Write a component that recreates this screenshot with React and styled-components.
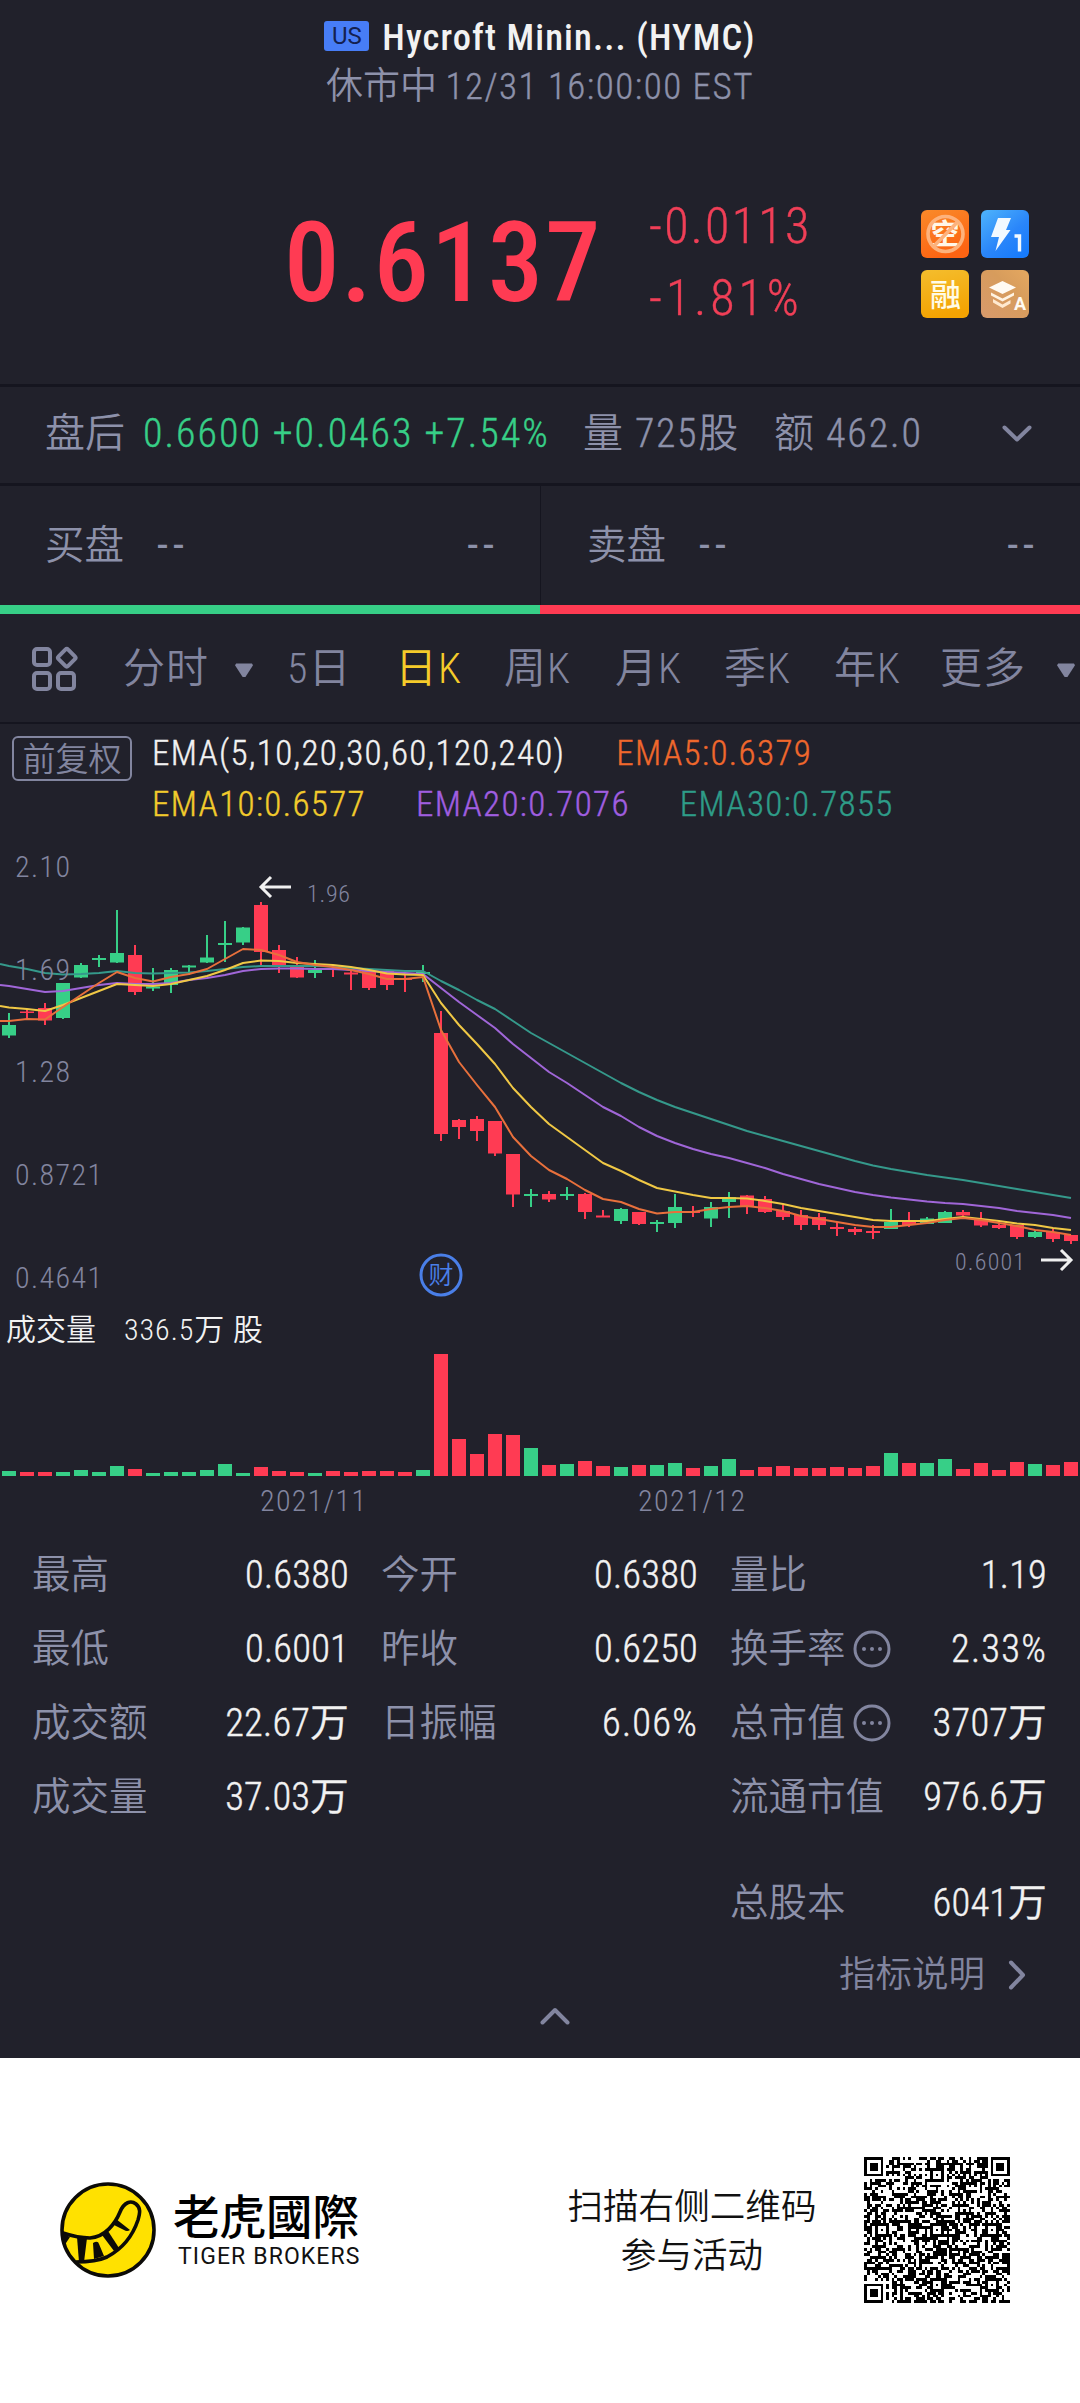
import React from 'react';
import styled, {createGlobalStyle} from 'styled-components';

const GlobalStyle = createGlobalStyle`
*{
    box-sizing:border-box;
    margin:0;
    padding:0;
}
body{
    background:#fff;
    font-family:"Roboto Condensed","Noto Sans CJK SC",sans-serif;
    font-weight:350;
    line-height:1.2;
    color:#f2f2f2;
}
svg{
    display:block;
}
`;

//Colours
const green = '#37cf87';
const red = '#ff3b53';
const grey = '#8d91aa';
const dim = '#82859f';
const line = '#15151f';

//Chart data, one entry per day: colour, body top, body bottom, wick top, wick bottom
const candles = [
    ['g',1025,1035.5,1013,1038],['r',1011.5,1013,1010,1020],['r',1008,1020.5,1003,1025],['g',983,1018,983,1019],
    ['g',965,977.5,963,978],['g',958,960,955,967],['g',953,962.5,910,963],['r',955,992,945,995],
    ['g',986.5,988.5,968,991],['g',970,985,968,993],['g',965.5,967.5,965,975],['g',957.5,962.5,935,963],
    ['g',943,945,921,962],['g',927.5,942.5,927,945],['r',905,952,902,967],['r',950,966,945,973],
    ['r',966,977.5,957,978],['g',970,973,960,978],['r',968,970,965,977],['r',972.5,974.5,970,990],
    ['r',971,988,971,990],['r',971,985,971,990],['r',978,980,971,992],['g',972,974,965,982],
    ['r',1033,1134,1011,1141],['r',1120,1127,1119,1139],['r',1119,1131,1116,1141],['r',1121,1153.5,1121,1156],
    ['r',1154,1194.5,1154,1207],['g',1194,1196,1189,1207],['r',1194,1199.5,1191,1202],['g',1194,1196,1187,1200],
    ['r',1194,1212,1193,1219],['r',1215.5,1217.5,1210,1217],['g',1209,1221,1208,1224],['r',1212,1224,1212,1225],
    ['g',1222,1224,1220,1232],['g',1207,1223,1194,1228],['r',1211,1213,1206,1217],['g',1207,1218.5,1202,1227],
    ['g',1197,1202,1192,1218],['r',1195.5,1206,1195,1214],['r',1199,1212,1196,1213],['r',1211,1217,1205,1220],
    ['r',1215,1225,1210,1230],['r',1217,1225,1213,1230],['r',1227,1229,1222,1236],['r',1229,1232,1227,1235],
    ['r',1231,1233,1225,1239],['g',1222,1229,1209,1229],['r',1222,1225,1212,1227],['g',1218.5,1224,1217,1224],
    ['g',1212,1223,1211,1223],['r',1212,1215.5,1210,1216],['r',1219,1225.5,1212,1227],['r',1225,1228,1224,1229],
    ['r',1225,1237,1225,1239],['g',1232,1237,1230,1238],['r',1232,1239,1229,1242],['r',1235,1241,1235,1244],
];
const volumes = [
    5,4,4,4,6,4,10,7,3,4,4,6,12,3,9,5,4,3,5,4,5,5,4,6,122,37,22,42,41,28,
    11,12,15,10,9,11,11,13,8,10,17,6,9,10,8,8,9,8,10,23,13,13,17,7,13,6,14,12,11,14,
];
const emaLines = [
    {color:'#35998b', start:964, values:[
        966,969,973,974.5,974,973,971,973,973.5,973,972.5,971,969,967,966,966,966,966,966.5,968,
        969,970,971,971,981,990,1000,1009,1021,1033,1043,1053,1063,1073,1083,1092,1100,1107,1113,1119,
        1125,1131,1136,1141,1146,1151,1156,1161,1165.5,1169,1172,1175,1177.5,1180,1183,1186,1189,1192,1195,1198]},
    {color:'#a066d8', start:985, values:[
        986,989,992,991,988,985,983,984,984,983,980,978,975,971,969,968.5,968.5,969,969,970,
        971,972,973,974,988,1002,1015,1028,1044,1058,1072,1083,1095,1107,1116,1127,1136,1143,1149,1154,
        1158,1163,1168,1174,1179,1184,1188,1192,1195,1197.5,1199.5,1201.5,1203,1204,1206,1208,1211,1213,1215,1218]},
    {color:'#f0c845', start:1006, values:[
        1007.5,1009,1011,1005,998,991,984,985,986,984,980,976,970,963,960.5,961,963,964,965,967,
        970,973.5,974.5,975,1003,1025,1044,1064,1088,1107,1124,1137,1150,1163,1171,1180,1188,1191.5,1195,1198,
        1198,1198.5,1201,1204,1208,1211,1214,1217,1220,1221,1221,1221,1219,1217,1219,1221,1223.5,1225,1228,1230]},
    {color:'#e8703c', start:1021, values:[
        1021,1019,1019.5,1007,995,983,972,978,981.5,977,974,969,959,949,950,955,962,965,967,970,
        974,979,979,977,1030,1062,1085,1107,1137,1156,1170,1179,1190,1199,1202,1209,1213.5,1212,1212,1209,
        1207,1206,1208,1211,1216,1219,1222,1225,1227,1227,1225,1223,1220,1218,1220,1223,1226,1230,1232,1235]},
];
const axis = [['2.10',866,55],['1.69',969,55],['1.28',1071,55],['0.8721',1174,87],['0.4641',1277,87]];
const pitch = 18;
const centre = i => 9 + i * pitch;
const paint = c => (c === 'g' ? green : red);

const stats = [
    [['最高','0.6380'],['今开','0.6380'],['量比','1.19']],
    [['最低','0.6001'],['昨收','0.6250'],['换手率','2.33%',true]],
    [['成交额','22.67万'],['日振幅','6.06%'],['总市值','3707万',true]],
    [['成交量','37.03万'],null,['流通市值','976.6万']],
];

//QR code: three finders, the alignment marks and seeded noise for the payload
const QR_SIZE = 53;
const ring = (x, y, cx, cy, r) => {
    const d = Math.max(Math.abs(x - cx), Math.abs(y - cy));
    return d > r ? null : r === 4 ? d !== 4 && d !== 2 : d !== 1;
};
const buildQr = () => {
    const marks = [[26,6],[46,26],[26,26],[6,26],[26,46],[46,46]];
    const finders = [[3,3],[49,3],[3,49]];
    let seed = 20211;
    let d = '';
    for(let y = 0; y < QR_SIZE; y++){
        for(let x = 0; x < QR_SIZE; x++){
            seed = (seed * 1103515 + 12345) % 2147483648;
            let on = (seed >> 12) % 100 < 52;
            if(x === 6 || y === 6) on = (x + y) % 2 === 0;
            marks.forEach(([cx,cy]) => {
                const hit = ring(x, y, cx, cy, 2);
                if(hit !== null) on = hit;
            });
            finders.forEach(([cx,cy]) => {
                const hit = ring(x, y, cx, cy, 4);
                if(hit !== null) on = hit;
            });
            if(on) d += `M${x} ${y}h1v1h-1z`;
        }
    }
    return d;
};
const qrPath = buildQr();

const Chevron = ({w, h, d}) => (
    <svg width={w} height={h} viewBox={`0 0 ${w} ${h}`} fill="none" stroke={dim} strokeWidth="4" strokeLinecap="round" strokeLinejoin="round">
        <path d={d} />
    </svg>
);

const Badges = () => (
    <BadgeGrid>
        <svg width="48" height="48" viewBox="0 0 48 48">
            <defs>
                <linearGradient id="short" x1="0" y1="0" x2="0.4" y2="1">
                    <stop offset="0" stopColor="#f98a2a" /><stop offset="1" stopColor="#fd6412" />
                </linearGradient>
            </defs>
            <rect width="48" height="48" rx="6" fill="url(#short)" />
            <text x="24" y="35" fontSize="29" fontWeight="700" textAnchor="middle" fill="#fff6e8">空</text>
            <circle cx="24.5" cy="24" r="17.5" fill="none" stroke="#fdb27c" strokeWidth="3.6" />
            <path d="M12.5 36.5L37 11.5" stroke="#fdb27c" strokeWidth="3.6" />
        </svg>
        <svg width="48" height="48" viewBox="0 0 48 48">
            <defs>
                <linearGradient id="flash" x1="0" y1="0" x2="0.8" y2="1">
                    <stop offset="0" stopColor="#4fb4fb" /><stop offset="0.6" stopColor="#2a86fa" /><stop offset="1" stopColor="#177bfb" />
                </linearGradient>
            </defs>
            <rect width="48" height="48" rx="6" fill="url(#flash)" />
            <path d="M17 8h13l-5 12h4.500L14.500 41l3.500-14h-8z" fill="#f2f9ff" />
            <path d="M33.500 26h5v15.500" fill="none" stroke="#f2f9ff" strokeWidth="3.400" />
        </svg>
        <svg width="48" height="48" viewBox="0 0 48 48">
            <defs>
                <linearGradient id="margin" x1="0" y1="0" x2="0.2" y2="1">
                    <stop offset="0" stopColor="#f4bd2d" /><stop offset="1" stopColor="#f4a302" />
                </linearGradient>
            </defs>
            <rect width="48" height="48" rx="6" fill="url(#margin)" />
            <text x="24.500" y="35.500" fontSize="31" fontWeight="500" textAnchor="middle" fill="#fffbe6">融</text>
        </svg>
        <svg width="48" height="48" viewBox="0 0 48 48">
            <defs>
                <linearGradient id="level" x1="0" y1="1" x2="1" y2="0">
                    <stop offset="0" stopColor="#d89a6c" /><stop offset="0.6" stopColor="#d79c5c" /><stop offset="1" stopColor="#e5a860" />
                </linearGradient>
            </defs>
            <rect width="48" height="48" rx="6" fill="url(#level)" />
            <path d="M21.500 11l13.500 6.500-13.500 6.500L8 17.500z" fill="#fffaf2" />
            <path d="M10 22.500l11.500 6 11.500-6v3l-11.500 6-11.500-6z" fill="#fff3e2" />
            <path d="M12 29l9.500 5.500 8-4.500v3.500l-8 4.500-9.500-5.500z" fill="#ffe9cf" />
            <text x="39" y="39.500" fontSize="18" fontWeight="700" fontFamily="Roboto" textAnchor="middle" fill="#fffaf2">A</text>
        </svg>
    </BadgeGrid>
);

const Chart = () => (
    <svg width="1080" height="690" viewBox="0 840 1080 690">
        {candles.map(([c,top,bottom,high,low], i) => (
            <g key={i} fill={paint(c)}>
                <rect x={centre(i) - 1} y={high} width="2" height={low - high} />
                <rect x={centre(i) - 7} y={top} width="14" height={bottom - top} />
            </g>
        ))}
        {emaLines.map(({color,start,values}) => (
            <polyline key={color} fill="none" stroke={color} strokeWidth="2" strokeLinejoin="round"
                points={`0,${start} ` + values.map((v, i) => `${centre(i)},${v}`).join(' ')} />
        ))}
        <g fill={dim} fontSize="30">
            {axis.map(([label,y,w]) => (
                <text key={label} x="15" y={y + 11} textLength={w} lengthAdjust="spacing">{label}</text>
            ))}
            <text x="260" y="1511" textLength="106">2021/11</text>
            <text x="638" y="1511" textLength="107">2021/12</text>
        </g>
        <g fill={dim} fontSize="24">
            <text x="307" y="902" textLength="43">1.96</text>
            <text x="955" y="1270" textLength="70">0.6001</text>
        </g>
        <g fill="none" stroke="#f0f0f0" strokeWidth="3">
            <path d="M291 887h-29M271 877l-10 10 10 10" />
            <path d="M1041 1260h29M1061 1250l10 10-10 10" />
        </g>
        <circle cx="441" cy="1275" r="20" fill="none" stroke="#4a7fe8" strokeWidth="3" />
        <text x="441" y="1284" fontSize="25" textAnchor="middle" fill="#4a7fe8">财</text>
        <g fill="#f2f2f2" fontSize="30">
            <text x="6" y="1340" textLength="90">成交量</text>
            <text x="124" y="1340" textLength="139">336.5万 股</text>
        </g>
        {volumes.map((v, i) => (
            <rect key={i} x={centre(i) - 7} y={1476 - v} width="14" height={v} fill={paint(candles[i][0])} />
        ))}
    </svg>
);

const TigerMark = () => (
    <svg width="96" height="96" viewBox="0 0 96 96" fill="none" stroke="#0c0b08">
        <circle cx="48" cy="48" r="46" fill="#ffe100" strokeWidth="3.6" />
        <path d="M3 51C12 54 20 56 30 56C45 55 55 42 60 30C64 20 71 18 76 22C81 26 80 31 78 38C72 56 62 67 47 75C38 79 28 80 16 80" strokeWidth="3.6" />
        <g fill="#0c0b08" stroke="none">
            <path d="M2 51l8 4-6 9z" />
            <path d="M17 55l10 1-3 24h-5z" />
            <path d="M33 61q5-3 6 1l5 12-10 3z" />
            <path d="M42 53l6-4 11 17-5 3z" />
            <path d="M52 42l4-5 14 11q-3 2-6 0z" />
        </g>
    </svg>
);

const App = () => {
    return(
        <Page>
            <GlobalStyle />
            <Header>
                <TitleRow>
                    <Market>US</Market>
                    <Title>Hycroft Minin... (HYMC)</Title>
                </TitleRow>
                <Status>休市中 <Num $ls={1.5}>12/31 16:00:00 EST</Num></Status>
                <PriceRow>
                    <Price>0.6137</Price>
                    <Change>
                        <Num $ls={2.3}>-0.0113</Num>
                        <Num $ls={4}>-1.81%</Num>
                    </Change>
                    <Badges />
                </PriceRow>
            </Header>
            <AfterHours>
                <span>盘后</span>
                <Num $ls={2} $color={green}>0.6600 +0.0463 +7.54%</Num>
                <Turnover>量<span><Num $ls={1.6}>725</Num>股</span></Turnover>
                <Turnover>额<Num $ls={1.9}>462.0</Num></Turnover>
                <Chevron w={30} h={18} d="M2.500 2.500L15 14.500L27.500 2.500" />
            </AfterHours>
            <Book>
                <Side><span>买盘</span><Dashes>--</Dashes><Dashes $end>--</Dashes></Side>
                <Side $line><span>卖盘</span><Dashes>--</Dashes><Dashes $end>--</Dashes></Side>
            </Book>
            <Ratio><Bar $color={green} /><Bar $color={red} /></Ratio>
            <Tabs>
                <svg width="48" height="48" viewBox="0 0 48 48" fill="none" stroke={dim} strokeWidth="4">
                    <rect x="4" y="4" width="16" height="16" rx="3" />
                    <rect x="4" y="28" width="16" height="16" rx="3" />
                    <rect x="28" y="28" width="16" height="16" rx="3" />
                    <rect x="30" y="6" width="13.500" height="13.500" rx="2" transform="rotate(45 36.750 12.750)" />
                </svg>
                <Tab $gap={26}>分时<Caret /></Tab>
                <Tab>5日</Tab>
                <Tab $active>日K</Tab>
                <Tab>周K</Tab>
                <Tab>月K</Tab>
                <Tab>季K</Tab>
                <Tab>年K</Tab>
                <Tab $gap={31}>更多<Caret /></Tab>
            </Tabs>
            <Legend>
                <Adjust>前复权</Adjust>
                <Emas>
                    <EmaRow $gap={51}>
                        <Ema $ls={1.3}>EMA(5,10,20,30,60,120,240)</Ema>
                        <Ema $ls={1.4} $color="#f0682c">EMA5:0.6379</Ema>
                    </EmaRow>
                    <EmaRow $gap={50}>
                        <Ema $ls={1.35} $color="#f2cb2c">EMA10:0.6577</Ema>
                        <Ema $ls={1.35} $color="#a05ee0">EMA20:0.7076</Ema>
                        <Ema $ls={1.35} $color="#2e9c88">EMA30:0.7855</Ema>
                    </EmaRow>
                </Emas>
            </Legend>
            <Chart />
            <Stats>
                {stats.map((row, i) => (
                    <StatRow key={i}>
                        {row.map((cell, j) => cell ? (
                            <Stat key={j}>
                                <Label>
                                    {cell[0]}
                                    {cell[2] && (
                                        <svg width="38" height="38" viewBox="0 0 38 38" fill={dim}>
                                            <circle cx="19" cy="19" r="17" fill="none" stroke={dim} strokeWidth="3" />
                                            <circle cx="11" cy="19" r="2" /><circle cx="19" cy="19" r="2" /><circle cx="27" cy="19" r="2" />
                                        </svg>
                                    )}
                                </Label>
                                <Num $ls={cell[1].includes('%') ? 1.2 : 0.2}>{cell[1]}</Num>
                            </Stat>
                        ) : <Stat key={j} />)}
                    </StatRow>
                ))}
                <StatRow $last>
                    <Stat /><Stat />
                    <Stat><Label>总股本</Label><Num $ls={0.2}>6041万</Num></Stat>
                </StatRow>
                <Explain>
                    指标说明
                    <Chevron w={18} h={30} d="M3 2.500L15 15L3 27.500" />
                </Explain>
                <Fold><Chevron w={30} h={18} d="M2.500 15.500L15 3L27.500 15.500" /></Fold>
            </Stats>
            <Footer>
                <TigerMark />
                <Brand>
                    <BrandName>老虎國際</BrandName>
                    <BrandSub>TIGER BROKERS</BrandSub>
                </Brand>
                <Invite>扫描右侧二维码<br />参与活动</Invite>
                <svg width="146" height="146" viewBox="0 0 53 53" shapeRendering="crispEdges"><path d={qrPath} fill="#000" /></svg>
            </Footer>
        </Page>
    );
};

const Page = styled.div`
width:1080px;
height:2403px;
overflow:hidden;
background:#21212b;
white-space:nowrap;
`;
const Num = styled.span`
letter-spacing:${p => p.$ls}px;
color:${p => p.$color || 'inherit'};
-webkit-text-stroke:0.4px currentColor;
`;
const Header = styled.div`
height:387px;
padding-top:14px;
border-bottom:3px solid ${line};
`;
const TitleRow = styled.div`
display:flex;
justify-content:center;
align-items:center;
gap:13px;
height:44px;
`;
const Market = styled.span`
width:45px;
height:30px;
border-radius:3px;
background:#477df6;
color:#14214f;
font:400 24px/31px Roboto,sans-serif;
text-align:center;
`;
const Title = styled.h1`
font-size:36.5px;
font-weight:500;
line-height:44px;
letter-spacing:1.1px;
padding-top:3px;
`;
const Status = styled.div`
height:54px;
font-size:37px;
line-height:58px;
text-align:center;
color:${grey};
`;
const PriceRow = styled.div`
display:flex;
padding:98px 51px 0 284px;
`;
const Price = styled.div`
width:365px;
height:110px;
font-size:111px;
font-weight:500;
line-height:106px;
letter-spacing:1.6px;
color:${red};
`;
const Change = styled.div`
display:flex;
flex-direction:column;
flex:1;
font-size:50px;
font-weight:350;
line-height:72px;
color:#f03f57;
margin-top:-20px;
`;
const BadgeGrid = styled.div`
display:grid;
grid-template-columns:48px 48px;
gap:12px;
font-family:"Noto Sans CJK SC",sans-serif;
align-self:flex-start;
`;
const AfterHours = styled.div`
display:grid;
grid-template-columns:98px 440px 191px 228px 30px;
align-items:center;
height:99px;
padding:0 0 3px 45px;
border-bottom:3px solid ${line};
font-size:40px;
color:${grey};
`;
const Turnover = styled.span`
display:flex;
gap:12px;
`;
const Book = styled.div`
display:grid;
grid-template-columns:1fr 1fr;
height:119px;
`;
const Side = styled.div`
display:flex;
align-items:center;
gap:33px;
padding:0 41px 0 ${p => p.$line ? 46 : 45}px;
border-left:${p => p.$line ? `1px solid ${line}` : 'none'};
font-size:39.5px;
color:${grey};
`;
const Dashes = styled.span`
font-size:44px;
font-weight:400;
letter-spacing:5px;
margin-left:${p => p.$end ? 'auto' : 0};
`;
const Ratio = styled.div`
display:flex;
height:9px;
`;
const Bar = styled.div`
flex:1;
background:${p => p.$color};
`;
const Tabs = styled.div`
display:grid;
grid-template-columns:93px 164px 108px 109px 111px 109px 110px 106px 137px;
align-items:center;
height:110px;
padding:2px 0 0 30px;
border-bottom:2px solid ${line};
`;
const Tab = styled.div`
display:flex;
align-items:center;
gap:${p => p.$gap || 0}px;
font-size:42px;
letter-spacing:1px;
color:${p => p.$active ? '#f5cb2a' : dim};
`;
const Caret = styled.i`
width:18px;
height:14px;
flex:none;
margin-top:3px;
background:${dim};
clip-path:polygon(0 12%,6% 0,94% 0,100% 12%,56% 100%,44% 100%);
`;
const Legend = styled.div`
display:flex;
align-items:flex-start;
gap:20px;
height:116px;
padding:12px 12px 0;
`;
const Adjust = styled.div`
width:120px;
height:45px;
border:2px solid ${dim};
border-radius:6px;
font-size:33px;
line-height:43px;
text-align:center;
color:${dim};
`;
const Emas = styled.div`
font-size:35px;
`;
const EmaRow = styled.div`
display:flex;
gap:${p => p.$gap}px;
height:51px;
line-height:35px;
`;
const Ema = styled(Num)``;
const Stats = styled.div`
height:528px;
padding:8px 32px 0 32px;
font-size:38.5px;
`;
const StatRow = styled.div`
display:grid;
grid-template-columns:317px 317px 317px;
column-gap:32px;
height:74px;
margin-top:${p => p.$last ? 32 : 0}px;
`;
const Stat = styled.div`
display:flex;
justify-content:space-between;
align-items:center;
`;
const Label = styled.span`
display:flex;
align-items:center;
gap:7px;
color:${grey};
`;
const Explain = styled.div`
display:flex;
justify-content:flex-end;
align-items:center;
gap:23px;
height:69px;
padding-right:22px;
font-size:36.5px;
color:${dim};
`;
const Fold = styled.div`
display:flex;
justify-content:center;
padding:0 0 0 30px;
margin-top:-2px;
`;
const Footer = styled.div`
display:flex;
align-items:center;
height:345px;
padding:0 70px 2px 60px;
background:#fff;
color:#111;
`;
const Brand = styled.div`
width:330px;
padding-left:17px;
`;
const BrandName = styled.div`
font:500 46.5px/52px "Noto Sans CJK TC",sans-serif;
color:#000;
`;
const BrandSub = styled.div`
padding:2px 0 0 5px;
font:400 23px/30px Roboto,sans-serif;
letter-spacing:1.1px;
`;
const Invite = styled.div`
flex:1;
padding:4px 0 0 34px;
font-size:35.6px;
line-height:49px;
text-align:center;
`;
export default App;
